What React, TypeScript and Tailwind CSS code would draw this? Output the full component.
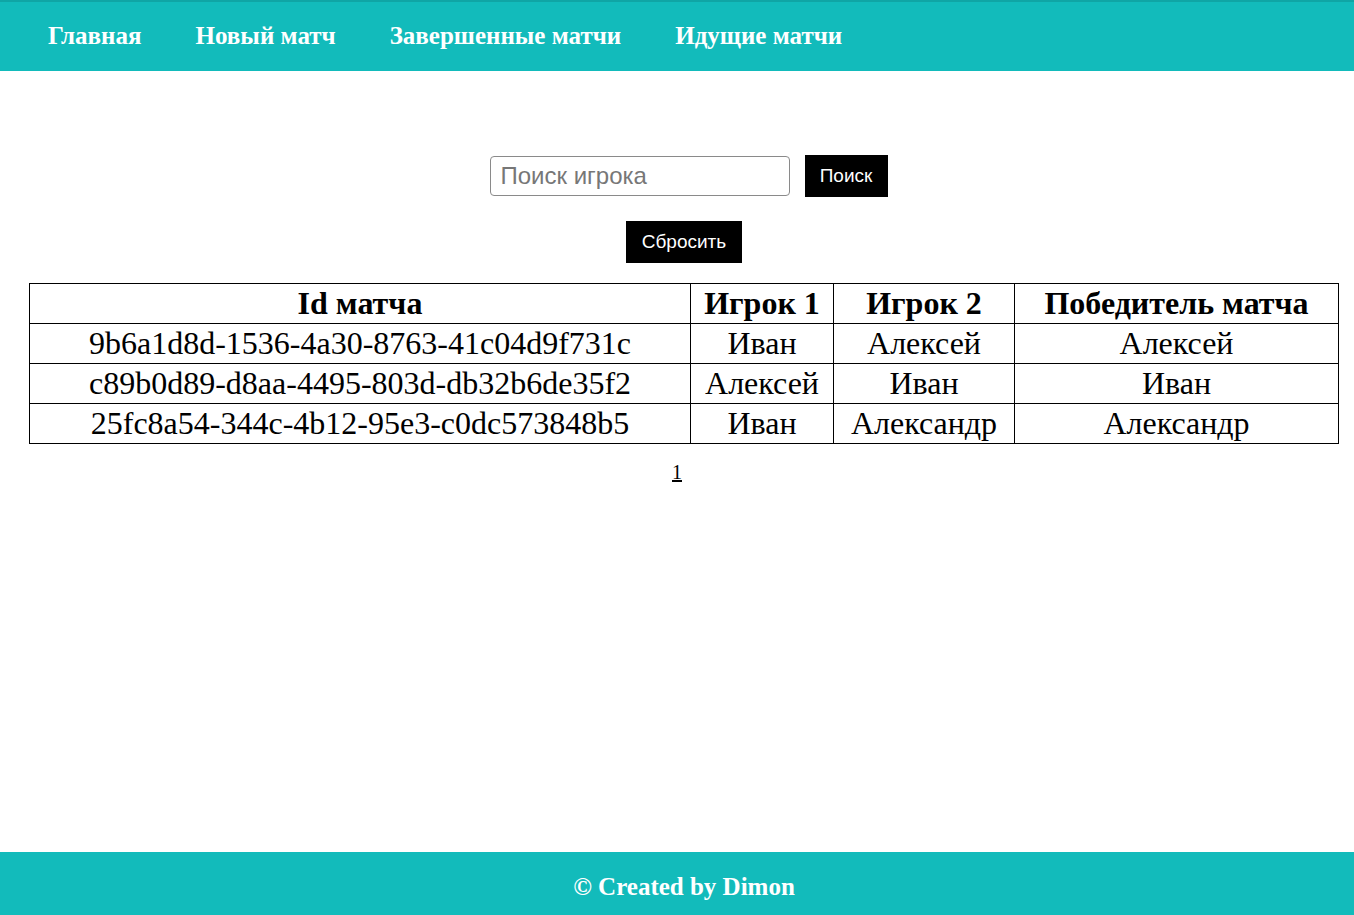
const matches = [
  { id: '9b6a1d8d-1536-4a30-8763-41c04d9f731c', p1: 'Иван', p2: 'Алексей', winner: 'Алексей' },
  { id: 'c89b0d89-d8aa-4495-803d-db32b6de35f2', p1: 'Алексей', p2: 'Иван', winner: 'Иван' },
  { id: '25fc8a54-344c-4b12-95e3-c0dc573848b5', p1: 'Иван', p2: 'Александр', winner: 'Александр' },
];

const navItems = ['Главная', 'Новый матч', 'Завершенные матчи', 'Идущие матчи'];

export default function App() {
  return (
    <div className="min-h-[915px] flex flex-col bg-white text-black font-['Liberation_Serif',serif]">
      {/* шапка */}
      <nav className="h-[71px] bg-[#12bbbb] border-t-2 border-[#0fa5a5] flex items-center pl-[48px] pb-[2px] gap-[54px]">
        {navItems.map(n => (
          <a key={n} className="text-white text-[25px] font-bold cursor-pointer">{n}</a>
        ))}
      </nav>

      <main className="flex-1 flex flex-col items-center">
        {/* поиск */}
        <div className="mt-[84px] flex items-center gap-[15px] ml-[23px]">
          <input
            placeholder="Поиск игрока"
            className="w-[300px] h-[40px] border border-[#8a8a8a] rounded-[4px] px-[10px] text-[24px] font-['Liberation_Sans',sans-serif] placeholder:text-[#777] outline-none"
          />
          <button className="h-[42px] w-[83px] bg-black text-white text-[19px] font-['Liberation_Sans',sans-serif]">Поиск</button>
        </div>
        <button className="mt-[24px] ml-[14px] h-[42px] w-[116px] bg-black text-white text-[19px] font-['Liberation_Sans',sans-serif]">Сбросить</button>

        {/* таблица */}
        <table className="mt-[20px] self-start ml-[29px] w-[1310px] border-collapse text-[32px] text-center leading-[39px]">
          <thead>
            <tr>
              <th className="border border-black w-[661px] font-bold">Id матча</th>
              <th className="border border-black w-[143px] font-bold">Игрок 1</th>
              <th className="border border-black w-[181px] font-bold">Игрок 2</th>
              <th className="border border-black font-bold">Победитель матча</th>
            </tr>
          </thead>
          <tbody>
            {matches.map(m => (
              <tr key={m.id}>
                <td className="border border-black font-normal">{m.id}</td>
                <td className="border border-black">{m.p1}</td>
                <td className="border border-black">{m.p2}</td>
                <td className="border border-black">{m.winner}</td>
              </tr>
            ))}
          </tbody>
        </table>

        <a className="mt-[13px] text-[20px] underline cursor-pointer">1</a>
      </main>

      {/* подвал */}
      <footer className="h-[63px] bg-[#12bbbb] flex items-center justify-center pl-[14px] pt-[6px]">
        <span className="text-white text-[25px] font-bold">© Created by Dimon</span>
      </footer>
    </div>
  );
}
